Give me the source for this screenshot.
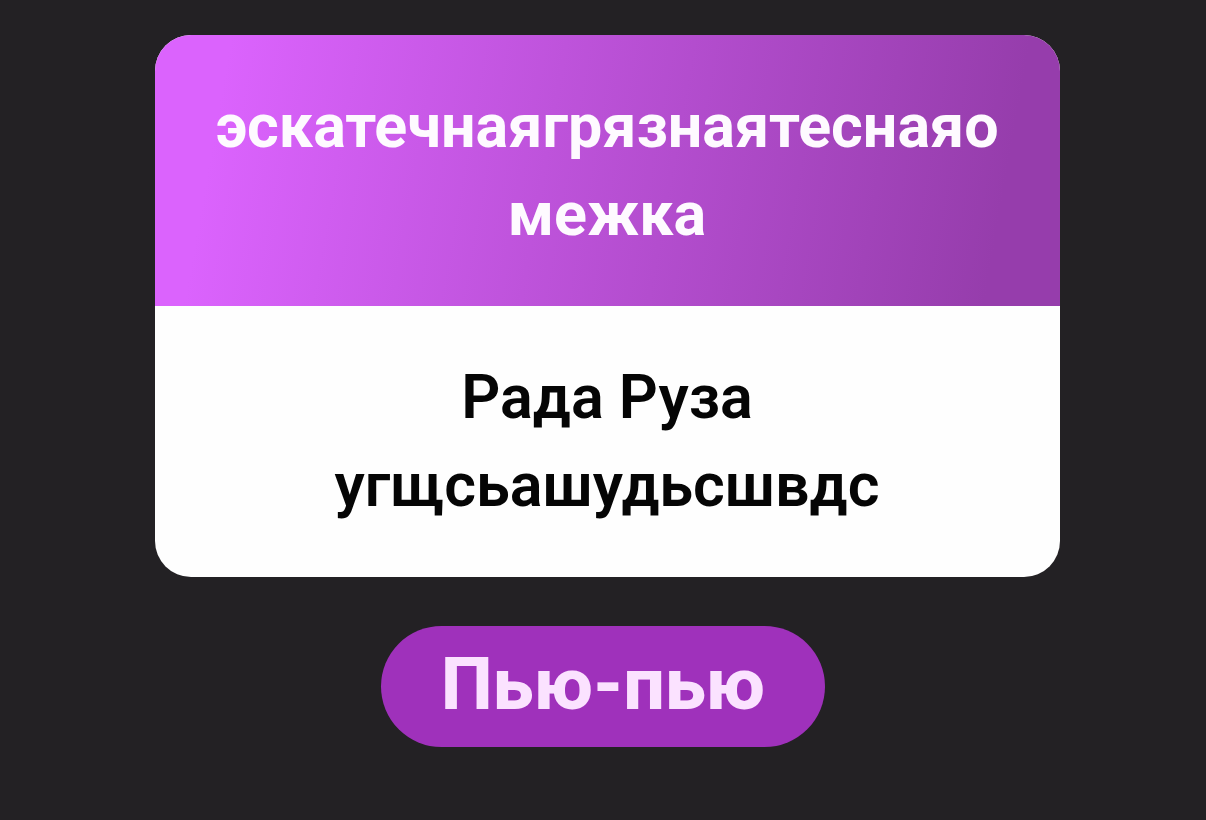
<main>
  <article class="card">
    <h1>эскатечнаягрязнаятеснаяомежка</h1>
    <p>Рада Руза угщсьашудьсшвдс</p>
  </article>
  <button type="button">Пью-пью</button>
</main>

<style>
  :global(body) {
    margin: 0;
    background: #232124;
  }

  main {
    box-sizing: border-box;
    min-height: 100vh;
    padding: 35px 12%;
    display: flex;
    flex-direction: column;
    align-items: center;
    gap: 49px;
    font-family: Roboto, "Noto Sans", sans-serif;
  }

  .card {
    box-sizing: border-box;
    width: 100%;
    max-width: 905px;
    margin-left: 8px;
    overflow: hidden;
    border-radius: 36px;
    background: #fefefe;
  }

  h1,
  p {
    margin: 0;
    padding: 47px 48px 48px;
    font-size: 61px;
    font-weight: 700;
    line-height: 88px;
    text-align: center;
    overflow-wrap: anywhere;
  }

  h1 {
    color: #fefaff;
    background: linear-gradient(100deg, #db63fd 8%, #963dac 92%);
  }

  p {
    color: #050505;
    font-weight: 600;
  }

  button {
    border: 0;
    border-radius: 61px;
    padding: 14px 60px 18px;
    background: #9f31bb;
    color: #fbe2ff;
    font-family: inherit;
    font-size: 73px;
    font-weight: 800;
    line-height: 89px;
    cursor: pointer;
  }
</style>
